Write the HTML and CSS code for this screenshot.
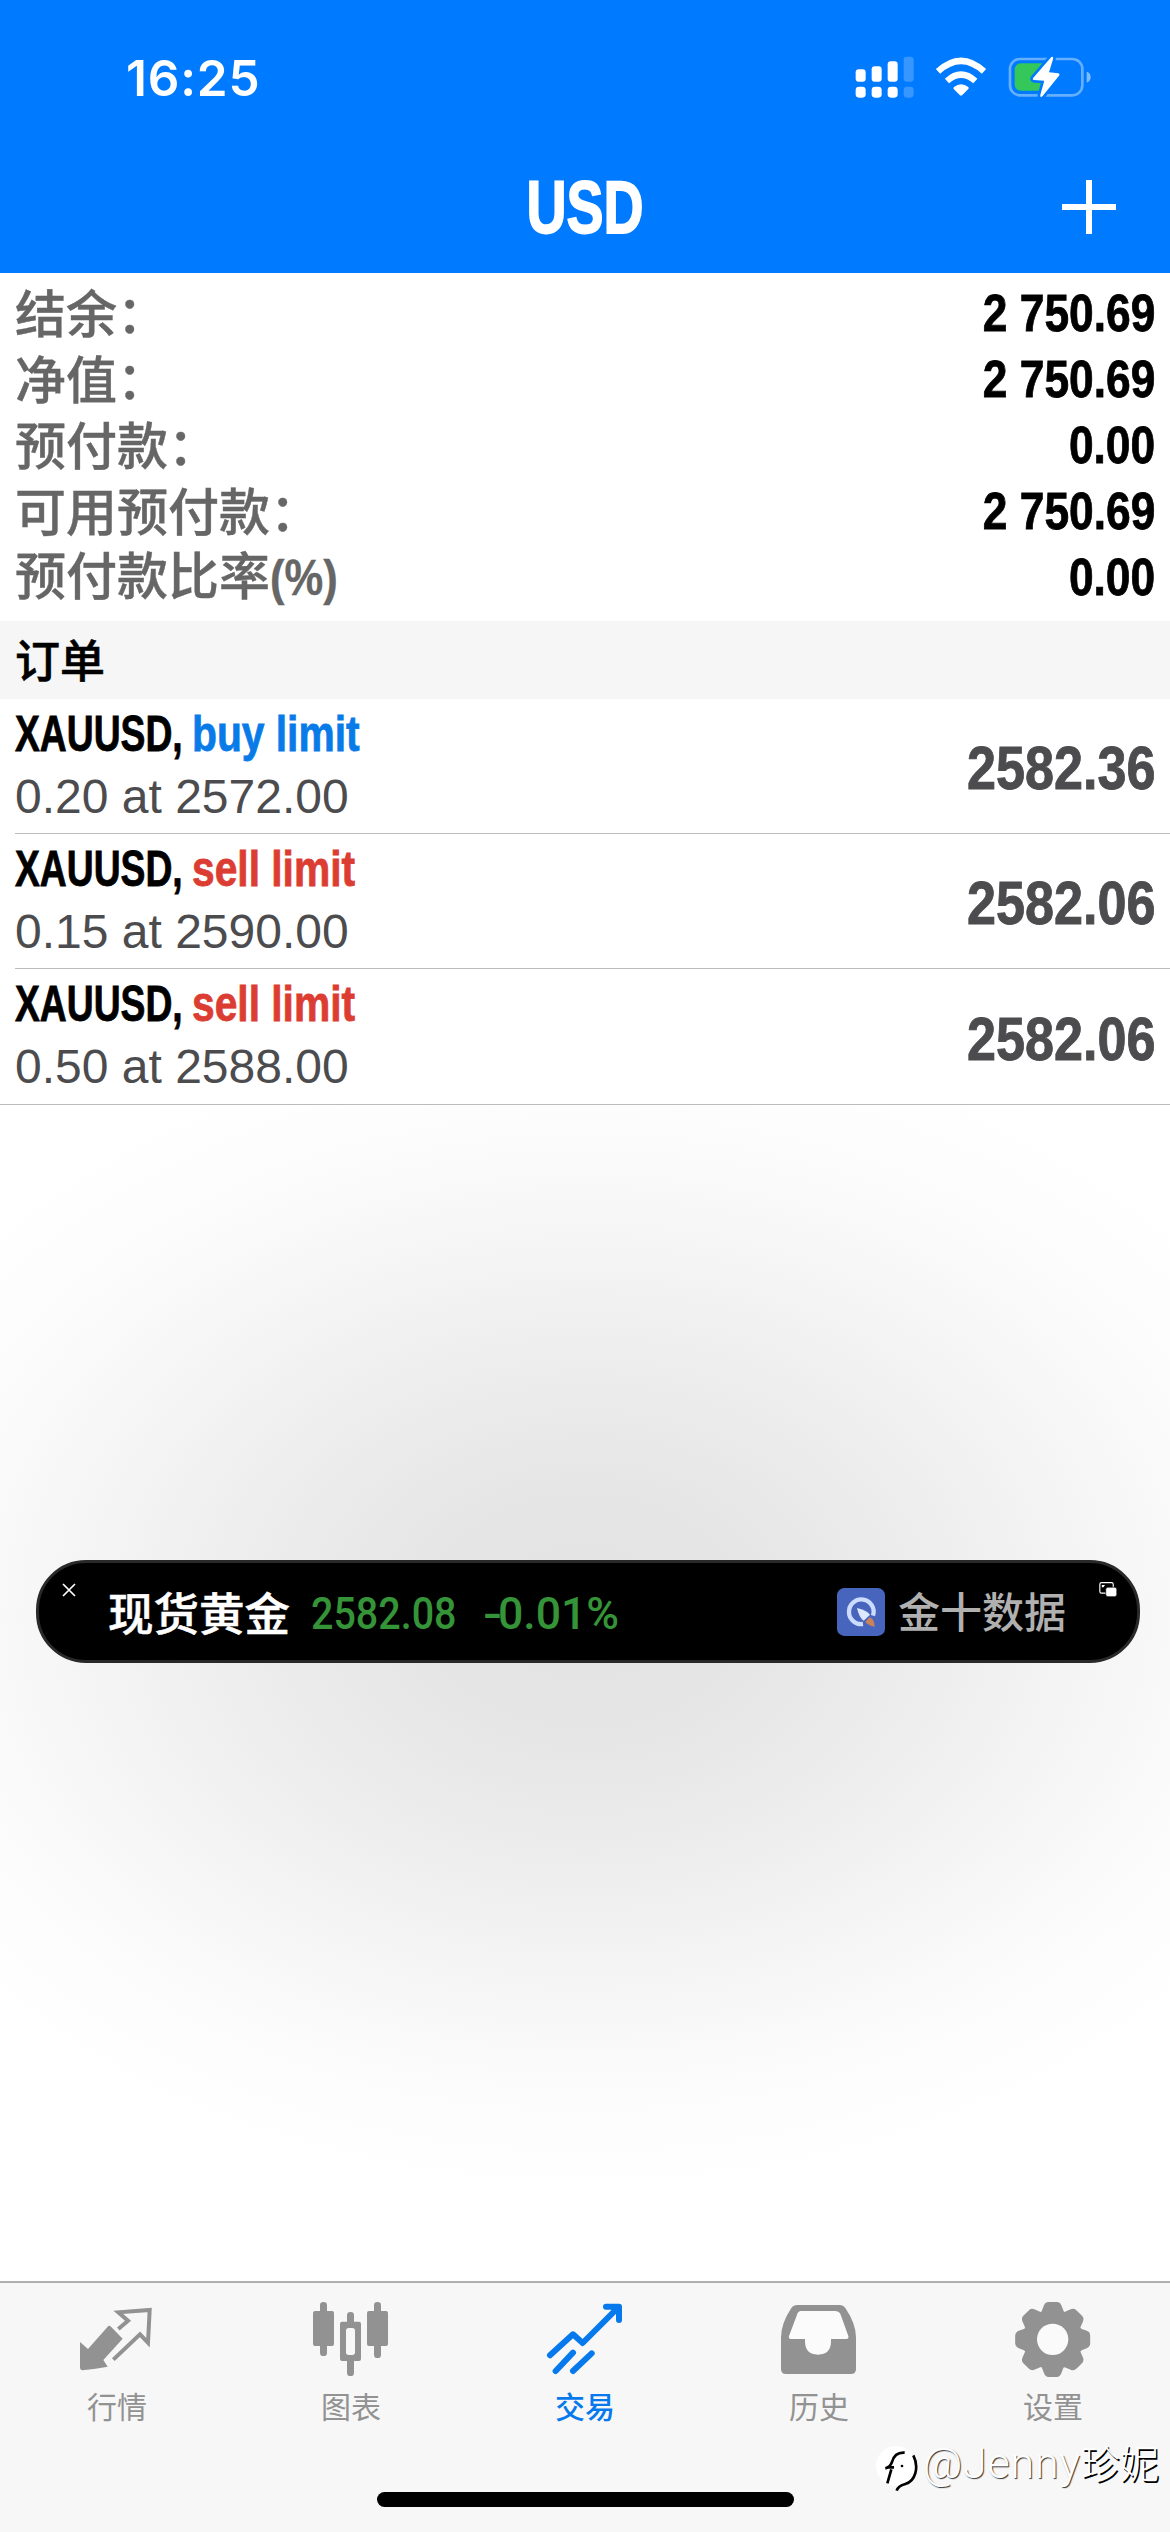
FILE: index.html
```html
<!DOCTYPE html>
<html lang="zh-CN">
<head>
<meta charset="utf-8">
<title>USD</title>
<link rel="stylesheet" href="styles.css">
</head>
<body>
<header class="header">
  <div class="status">
    <span class="time">16:25</span>
    <svg class="status-icons" viewBox="100 70 720 150">
      <g fill="#fff">
        <rect x="108" y="119" width="30" height="37" rx="9"/><rect x="156" y="110" width="30" height="46" rx="9"/><rect x="204" y="95" width="30" height="61" rx="9"/>
        <rect x="108" y="171" width="30" height="33" rx="10"/><rect x="156" y="171" width="30" height="33" rx="10"/><rect x="204" y="171" width="30" height="33" rx="10"/>
        <g opacity=".22"><rect x="252" y="81" width="30" height="75" rx="9"/><rect x="252" y="171" width="30" height="33" rx="10"/></g>
        <path d="M403 172Q424 156 446 172Q448 175 446 178L428 196Q424 199 420 196L402 178Q400 175 403 172Z"/>
      </g>
      <g fill="none" stroke="#fff" stroke-width="19"><path d="M355 125Q424 62 493 125"/><path d="M382 154Q424 116 467 154"/></g>
      <rect x="571" y="88" width="217" height="109" rx="30" fill="none" stroke="#fff" stroke-opacity=".4" stroke-width="8"/>
      <path d="M801 126Q813 130 813 142Q813 155 801 159Z" fill="#fff" fill-opacity=".5"/>
      <path d="M606 101H680V183H606Q585 183 585 162V122Q585 101 606 101Z" fill="#34c759"/>
      <path d="M695 82Q703 79 700 89L688 128L716 131Q722 133 718 138L669 199Q660 206 662 195L674 153L643 151Q637 149 641 144Z" fill="#fff" stroke="#007aff" stroke-width="16" paint-order="stroke" stroke-linejoin="round"/>
    </svg>
  </div>
  <div class="nav">
    <h1 class="title">USD</h1>
    <svg class="add" viewBox="0 0 54 54"><path d="M27 0V54M0 27H54" stroke="#fff" stroke-width="6"/></svg>
  </div>
</header>

<section class="summary">
  <div class="line"><span class="label">结余：</span><span class="value">2 750.69</span></div>
  <div class="line"><span class="label">净值：</span><span class="value">2 750.69</span></div>
  <div class="line"><span class="label">预付款：</span><span class="value">0.00</span></div>
  <div class="line"><span class="label">可用预付款：</span><span class="value">2 750.69</span></div>
  <div class="line"><span class="label">预付款比率<span class="unit">(%)</span></span><span class="value">0.00</span></div>
</section>

<h2 class="section">订单</h2>
<section class="orders">
  <div class="order">
    <div class="info">
      <div class="name"><span class="symbol">XAUUSD,</span><span class="side buy">buy limit</span></div>
      <div class="detail">0.20 at 2572.00</div>
    </div>
    <span class="price">2582.36</span>
  </div>
  <div class="order">
    <div class="info">
      <div class="name"><span class="symbol">XAUUSD,</span><span class="side sell">sell limit</span></div>
      <div class="detail">0.15 at 2590.00</div>
    </div>
    <span class="price">2582.06</span>
  </div>
  <div class="order">
    <div class="info">
      <div class="name"><span class="symbol">XAUUSD,</span><span class="side sell">sell limit</span></div>
      <div class="detail">0.50 at 2588.00</div>
    </div>
    <span class="price">2582.06</span>
  </div>
</section>

<main class="empty"></main>

<aside class="ticker">
  <svg class="close" viewBox="0 0 14 14"><path d="M1 1L13 13M13 1L1 13" stroke="#fff" stroke-width="1.7"/></svg>
  <span class="asset">现货黄金</span>
  <span class="quote">2582.08</span>
  <span class="change"><span class="minus">-</span><span class="pct">0.01%</span></span>
  <svg class="brand-logo" viewBox="0 0 144 144">
    <rect width="144" height="144" rx="22" fill="#4865bd"/>
    <path d="M108 83A37 37 0 1 0 78 108" fill="none" stroke="#cbdcff" stroke-width="13"/>
    <path d="M60 60Q88 66 99 80L80 98Q66 88 60 60Z" fill="#dce8ff"/>
    <path d="M98 88Q113 94 113 116Q92 112 85 101Z" fill="#c98259"/>
  </svg>
  <span class="brand">金十数据</span>
  <svg class="pip" viewBox="0 0 54 46"><rect x="2" y="2" width="41" height="32" rx="5" fill="none" stroke="#fff" stroke-width="3.5"/><rect x="20" y="16" width="34" height="29" rx="7" fill="#fff" stroke="#000" stroke-width="2"/><path d="M8 9H18L13 16H8Z" fill="#fff"/></svg>
</aside>

<footer class="tabbar">
  <nav class="tabs">
    <a class="tab"><svg viewBox="96 84 270 240">
      <path d="M120 216L144 237L205 168Q209 166 213 170L248 206L190 270L203 290Q168 296 128 301Q120 301 120 292Z" fill="#929292"/>
      <path d="M235 177L264 152L235 127L329 120L324 218L300 193L220 269" fill="none" stroke="#929292" stroke-width="12"/>
    </svg>行情</a>
    <a class="tab"><svg viewBox="798 84 270 240">
      <g fill="#929292"><rect x="840" y="96" width="21" height="162" rx="10"/><rect x="819" y="123" width="63" height="105" rx="6"/><rect x="1002" y="96" width="21" height="168" rx="10"/><rect x="981" y="123" width="63" height="105" rx="6"/><rect x="921" y="126" width="21" height="192" rx="10"/><rect x="900" y="155" width="63" height="118" rx="6"/></g>
      <rect x="918" y="174" width="27" height="81" rx="8" fill="#f7f7f7"/>
    </svg>图表</a>
    <a class="tab active"><svg viewBox="120 84 270 240">
      <g fill="none" stroke="#067aec" stroke-width="18" stroke-linecap="round" stroke-linejoin="round"><path d="M150 256L219 193L248 219L354 113M318 110H357V150M219 248L167 303M275 250L219 303"/></g>
    </svg>交易</a>
    <a class="tab"><svg viewBox="822 84 270 240">
      <path d="M892 105H1018Q1030 105 1036 114Q1068 161 1068 202V298Q1068 312 1053 312H858Q843 312 843 298V202Q843 161 874 114Q880 105 892 105Z" fill="#929292"/>
      <path d="M903 123H1005Q1018 123 1022 134L1045 198Q1047 207 1039 207H993V214Q993 254 954 254Q915 254 915 214V207H873Q865 207 867 198L891 134Q894 123 903 123Z" fill="#fbfbfb"/>
    </svg>历史</a>
    <a class="tab"><svg viewBox="474 84 270 240">
      <g fill="#929292"><circle cx="608" cy="208" r="86"/>
        <path id="tooth" d="M566 136Q577 124 582 106Q586 96 596 96H620Q630 96 634 106Q639 124 650 136L650 280Q639 292 634 310Q630 321 620 321H596Q586 321 582 310Q577 292 566 280Z"/>
        <use href="#tooth" transform="rotate(45 608 208.5)"/><use href="#tooth" transform="rotate(90 608 208.5)"/><use href="#tooth" transform="rotate(135 608 208.5)"/></g>
      <circle cx="608" cy="208" r="47" fill="#fafafa"/>
    </svg>设置</a>
  </nav>
  <div class="home-bar"></div>
</footer>

<div class="watermark">
  <svg viewBox="0 0 126 144"><circle cx="60" cy="66" r="60" fill="#fff"/><path d="M34 118L46 76M28 73Q42 70 48 54Q56 24 86 26M34 70H54M112 34C130 70 118 112 88 120Q66 126 62 140" fill="none" stroke="#000" stroke-width="8"/><circle cx="78" cy="66" r="4"/></svg>
  <span class="handle">@Jenny</span><span class="handle-cjk">珍妮</span>
</div>
</body>
</html>
```

FILE: styles.css
```css
* { box-sizing: border-box; }
body {
  margin: 0;
  width: 1170px;
  height: 2532px;
  display: flex;
  flex-direction: column;
  position: relative;
  overflow: hidden;
  background: #fff;
  font-family: "Liberation Sans", "Noto Sans CJK SC", sans-serif;
}
svg { display: block; flex: none; }

.header { height: 273px; background: #007aff; color: #fff; }
.status { height: 141px; padding: 15px 63px 0 126px; display: flex; align-items: center; justify-content: space-between; }
.time { font: 600 49.5px/60px Inter, sans-serif; letter-spacing: 0.8px; }
.status-icons { width: 240px; height: 50px; margin-right: 13.7px; }
.nav { height: 132px; padding: 0 54px; display: grid; grid-template-columns: 54px 1fr 54px; align-items: center; }
.title { grid-column: 2; margin: 0; padding-top: 2px; font-size: 73.5px; line-height: 84px; text-align: center; transform: scaleX(0.755); -webkit-text-stroke: 1.8px currentColor; }
.add { width: 54px; height: 54px; }

.summary { height: 348px; padding: 4px 15px 0 15px; }
.line { height: 66px; display: flex; justify-content: space-between; align-items: center; }
.label { color: #666; font: 500 51px/64px "Noto Sans CJK SC", sans-serif; padding-top: 1px; -webkit-text-stroke: 0.4px currentColor; }
.unit { display: inline-block; font: bold 50px/60px "Liberation Sans", sans-serif; transform: scaleX(0.87); transform-origin: left; }
.value { padding-top: 5px; font-size: 52px; line-height: 60px; font-weight: bold; transform: scaleX(0.853); transform-origin: right; -webkit-text-stroke: 0.8px currentColor; }

.section { margin: 0; height: 78px; padding-left: 15px; background: #f6f6f6; color: #000; font: 500 45px/75px "Noto Sans CJK SC", sans-serif; -webkit-text-stroke: 0.6px currentColor; }

.order { height: 135px; margin-left: 15px; padding-right: 15px; display: flex; justify-content: space-between; align-items: center; border-bottom: 1px solid #bbb; }
.order:last-child { height: 136px; margin-left: 0; padding-left: 15px; }
.info { padding-bottom: 1px; }
.name { height: 62px; line-height: 61px; display: flex; font-size: 50px; font-weight: bold; -webkit-text-stroke: 0.8px currentColor; }
.symbol { width: 177px; transform: scaleX(0.745); transform-origin: left; white-space: nowrap; }
.side { transform: scaleX(0.815); transform-origin: left; }
.buy { color: #087be8; }
.sell { color: #dc3d32; }
.detail { height: 62px; line-height: 62px; font-size: 48px; color: #4c4c4f; }
.price { padding-top: 4px; font-size: 61px; line-height: 70px; font-weight: bold; color: #4c4c4f; transform: scaleX(0.855); transform-origin: right; -webkit-text-stroke: 0.9px currentColor; }

.empty {
  flex: 1;
  background: radial-gradient(ellipse 820px 600px at 585px 507px, #e2e2e2 0%, #e6e6e6 22%, #ededed 42%, #f5f5f5 62%, #fbfbfb 78%, #fefefe 92%, #fff 100%);
}

.ticker {
  position: absolute;
  left: 36px;
  top: 1560px;
  width: 1104px;
  height: 103px;
  border: 3px solid #292929;
  border-radius: 50px;
  background: #000;
  display: flex;
  align-items: center;
  padding: 0 20px 0 23px;
}
.close { width: 14px; height: 14px; margin-bottom: 44px; }
.asset { margin-left: 32px; padding-bottom: 1px; color: #fff; font: 500 45.5px/60px "Noto Sans CJK SC", sans-serif; -webkit-text-stroke: 0.5px currentColor; }
.quote, .change { padding-top: 4px; color: #359338; font: 500 45px/60px Roboto, sans-serif; }
.quote { width: 142px; margin-left: 21px; transform: scaleX(0.877); transform-origin: left; }
.change { display: flex; width: 137px; margin-left: 30px; }
.minus { width: 21px; transform: scaleX(1.25); transform-origin: left; }
.pct { transform: scaleX(0.99); transform-origin: left; }
.brand-logo { width: 48px; height: 48px; margin-left: auto; }
.brand { margin-left: 13px; padding-bottom: 3px; color: #b0b0b0; font: 500 42px/60px "Noto Sans CJK SC", sans-serif; }
.pip { width: 18px; height: 15px; margin: 0 0 45px 33px; }

.tabbar { height: 251px; flex: none; border-top: 2px solid #b0b0b0; background: #f7f7f7; display: flex; flex-direction: column; align-items: center; }
.tabs { width: 100%; display: grid; grid-template-columns: repeat(5, 1fr); padding-top: 15px; }
.tab { display: flex; flex-direction: column; align-items: center; color: #929292; font: 400 30px/40px "Noto Sans CJK SC", sans-serif; gap: 7px; }
.tab svg { width: 90px; height: 80px; }
.active { color: #067aec; font-weight: 500; }
.home-bar { width: 417px; height: 15px; margin-top: 67px; border-radius: 8px; background: #000; }

.watermark { position: absolute; left: 876px; top: 2434px; height: 58px; display: flex; align-items: center; color: #fff; text-shadow: 1px 1px 1px #333; }
.watermark svg { width: 42px; height: 48px; margin: 10px 5px 0 0; }
.handle { width: 158px; font: 300 43px/58px Roboto, sans-serif; letter-spacing: 0.8px; }
.handle-cjk { font: 300 39px/54px "Noto Sans CJK SC", sans-serif; padding-bottom: 4px; text-shadow: 1.5px 1.5px 0 #000; }
```
